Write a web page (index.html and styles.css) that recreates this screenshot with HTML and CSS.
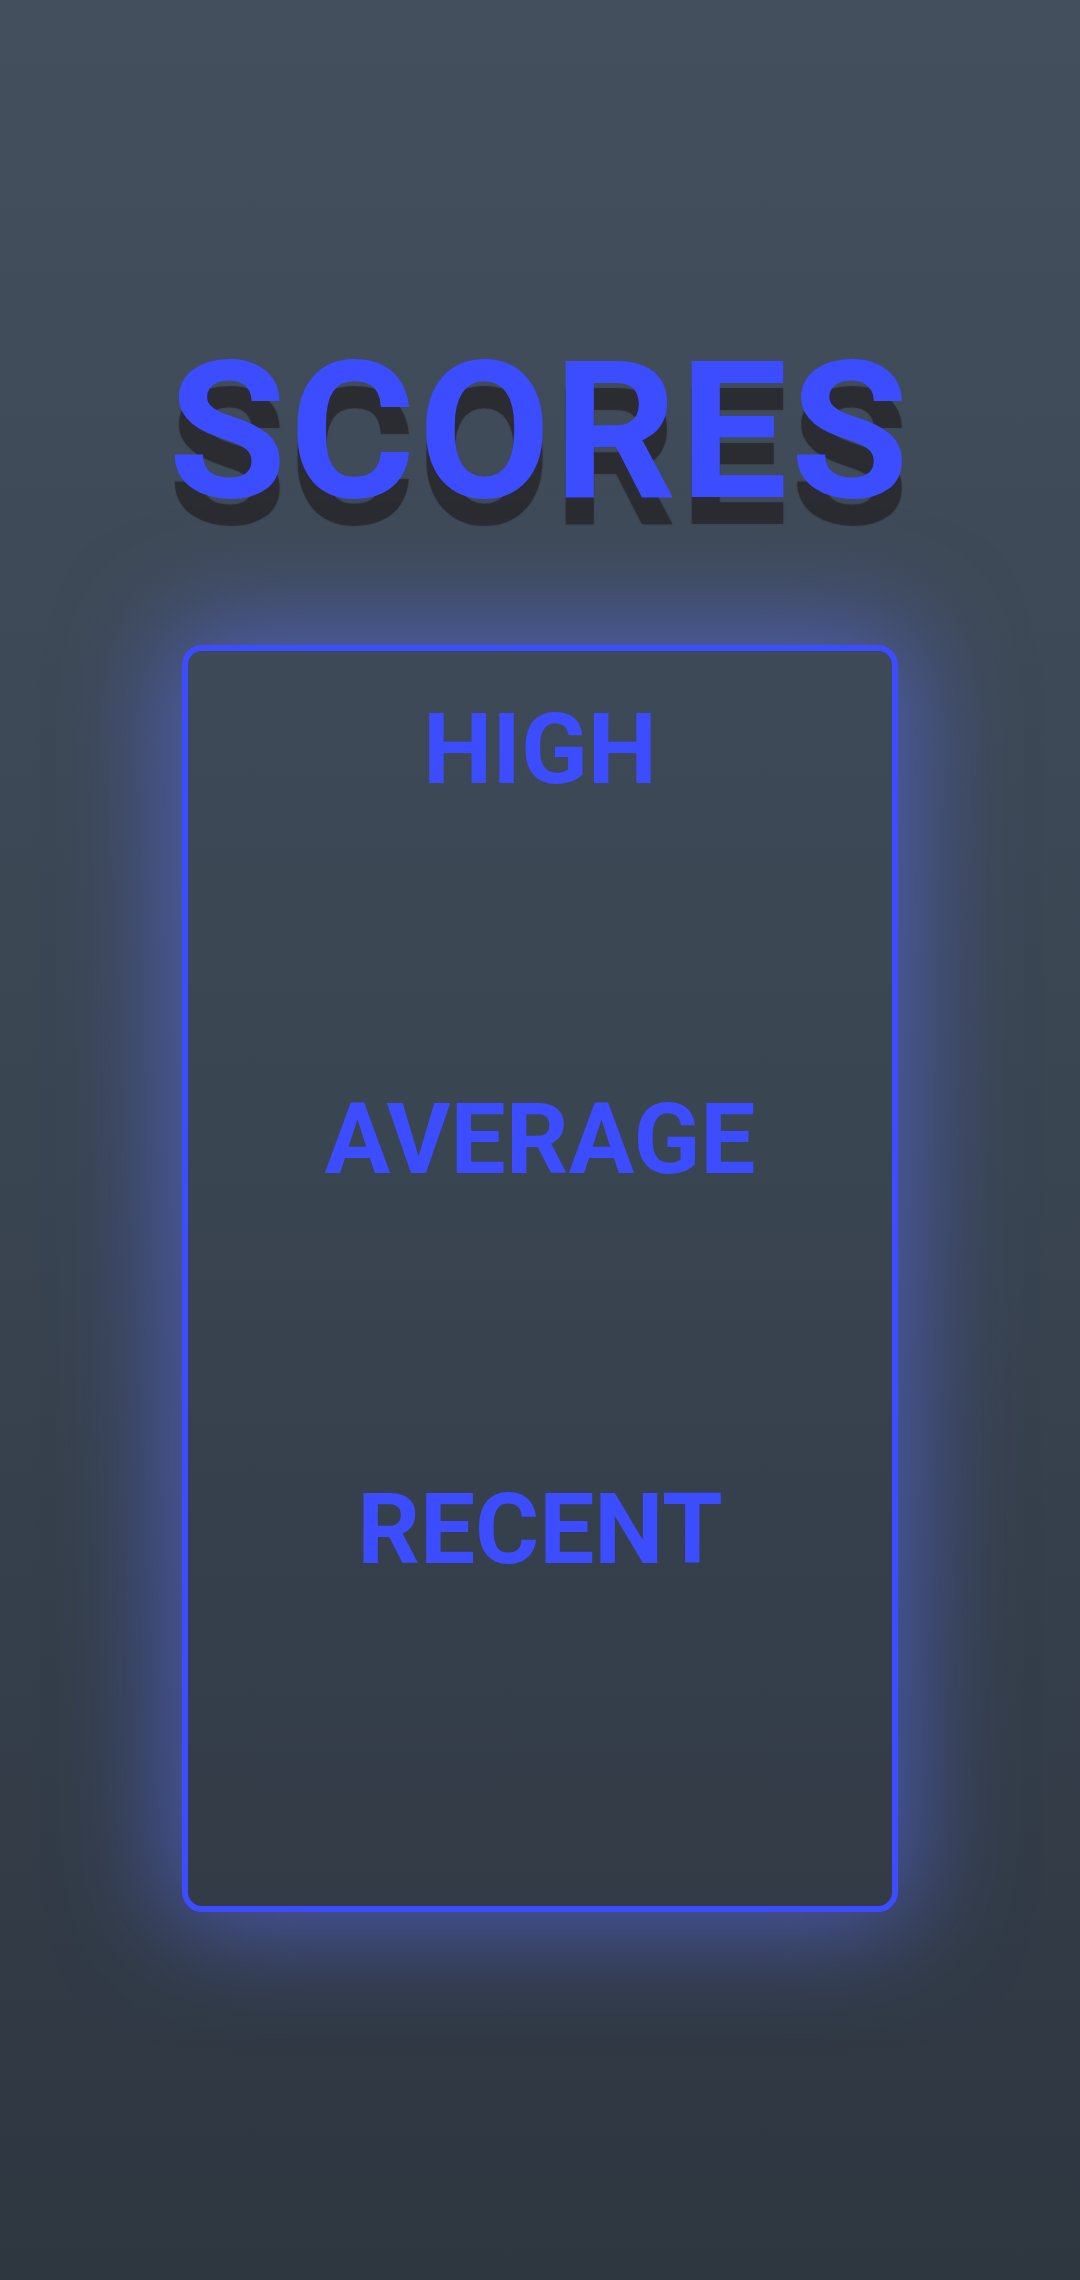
FILE: index.html
```html
<!DOCTYPE html>
<html>
<head>
<meta charset="utf-8">
<title>Scores</title>
<link rel="stylesheet" href="styles.css">
</head>
<body>
<main class="screen">
  <h1 class="title">SCORES</h1>
  <section class="card">
    <div class="stat">
      <h2 class="stat-label">HIGH</h2>
      <div class="stat-value"></div>
    </div>
    <div class="stat">
      <h2 class="stat-label">AVERAGE</h2>
      <div class="stat-value"></div>
    </div>
    <div class="stat">
      <h2 class="stat-label">RECENT</h2>
      <div class="stat-value"></div>
    </div>
  </section>
</main>
</body>
</html>
```
FILE: styles.css
```css
html, body {
  margin: 0;
  padding: 0;
}
body {
  width: 1080px;
  height: 2280px;
  background: linear-gradient(180deg, #434f5d 0%, #3a4552 50%, #2e3640 100%);
  font-family: Roboto, "Liberation Sans", sans-serif;
  overflow: hidden;
}
.screen {
  display: flex;
  flex-direction: column;
  align-items: center;
  padding-top: 336px;
}
.title {
  margin: 0;
  font-size: 192px;
  line-height: 1;
  font-weight: 700;
  letter-spacing: 3px;
  color: #3c4dff;
  text-shadow: 0 27px 1px #2b2c31;
  text-align: center;
}
.card {
  box-sizing: border-box;
  width: 716px;
  height: 1267px;
  margin-top: 117px;
  border: 6px solid #3c4dff;
  border-radius: 20px;
  box-shadow: 0 0 110px 12px rgba(92, 112, 255, 0.6);
  padding-top: 50px;
  display: flex;
  flex-direction: column;
  align-items: center;
}
.stat {
  height: 390px;
  display: flex;
  flex-direction: column;
  align-items: center;
}
.stat-label {
  margin: 0;
  font-size: 98px;
  line-height: 1;
  font-weight: 700;
  color: #3c4dff;
}
.stat-value {
  flex: 1;
}
```
